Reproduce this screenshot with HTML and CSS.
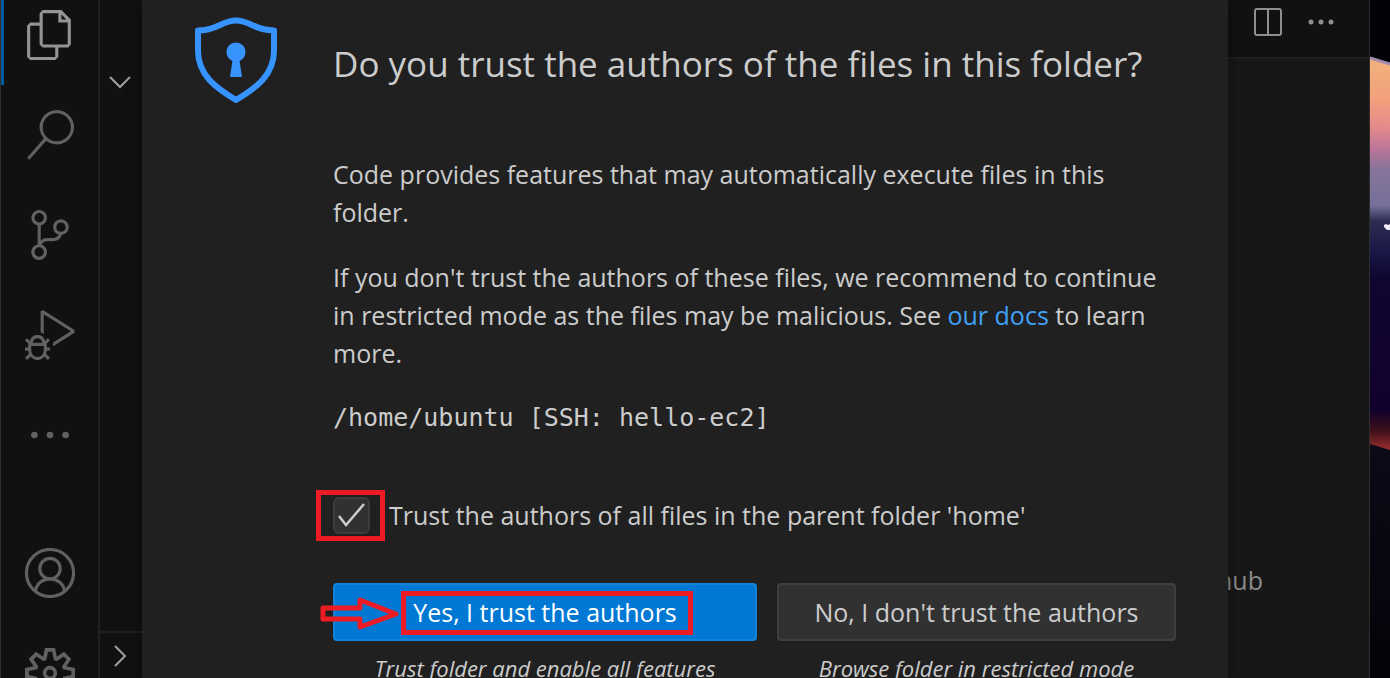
FILE: index.html
```html
<!DOCTYPE html>
<html lang="en">
<head>
<meta charset="utf-8">
<meta name="viewport" content="width=device-width, initial-scale=1">
<title>Workspace Trust</title>
<link rel="stylesheet" href="styles.css">
</head>
<body>
<div class="desktop">
  <div class="window">
    <nav class="activity-bar" aria-label="Activity bar">
      <div class="activity-group activity-top">
        <button class="activity active" aria-label="Explorer"><svg viewBox="0 0 24 24"><path d="M17.5 0h-9L7 1.5V6H2.5L1 7.5v15.07L2.5 24h12.07L16 22.57V18h4.7l1.3-1.43V4.5L17.5 0zm0 2.12l2.38 2.38H17.5V2.12zm-3 20.38h-12v-15H7v9.07L8.5 18h6v4.5zm6-6h-12v-15H16V6h4.5v10.5z"/></svg></button>
        <button class="activity" aria-label="Search"><svg viewBox="0 0 24 24"><path d="M15.25 0a8.25 8.25 0 0 0-6.18 13.72L1 22.88l1.12 1 8.05-9.12A8.251 8.251 0 1 0 15.25.01V0zm0 15a6.75 6.75 0 1 1 0-13.5 6.75 6.75 0 0 1 0 13.5z"/></svg></button>
        <button class="activity" aria-label="Source control"><svg viewBox="0 0 24 24"><path d="M21.007 8.222A3.738 3.738 0 0 0 15.045 5.2a3.737 3.737 0 0 0 1.156 6.583 2.988 2.988 0 0 1-2.668 1.67h-2.99a4.456 4.456 0 0 0-2.989 1.165V7.4a3.737 3.737 0 1 0-1.494 0v9.117a3.776 3.776 0 1 0 1.816.099 2.99 2.99 0 0 1 2.668-1.667h2.99a4.484 4.484 0 0 0 4.223-3.039 3.736 3.736 0 0 0 3.25-3.687zM4.565 3.738a2.242 2.242 0 1 1 4.484 0 2.242 2.242 0 0 1-4.484 0zm4.484 16.441a2.242 2.242 0 1 1-4.484 0 2.242 2.242 0 0 1 4.484 0zm8.221-9.715a2.242 2.242 0 1 1 0-4.485 2.242 2.242 0 0 1 0 4.485z"/></svg></button>
        <button class="activity" aria-label="Run and debug"><svg viewBox="0 0 24 24"><path d="M10.94 13.5l-1.32 1.32a3.73 3.73 0 0 0-7.24 0L1.06 13.5 0 14.56l1.72 1.72-.22.22V18H0v1.5h1.5v.08c.077.489.214.966.41 1.42L0 22.94 1.06 24l1.65-1.65A4.308 4.308 0 0 0 6 24a4.31 4.31 0 0 0 3.29-1.65L10.94 24 12 22.94 10.09 21c.198-.464.336-.951.41-1.45v-.1H12V18h-1.5v-1.5l-.22-.22L12 14.56l-1.06-1.06zM6 13.5a2.25 2.25 0 0 1 2.25 2.25h-4.5A2.25 2.25 0 0 1 6 13.5zm3 6a3.33 3.33 0 0 1-3 3 3.33 3.33 0 0 1-3-3v-2.25h6v2.25zm14.76-9.9v1.26L13.5 17.37V15.6l8.5-5.37L9 2v9.46a5.07 5.07 0 0 0-1.5-.72V.63L8.64 0l15.12 9.6z"/></svg></button>
        <button class="activity" aria-label="Additional views"><svg viewBox="0 0 24 24"><circle cx="4.5" cy="12" r="1.6"/><circle cx="12" cy="12" r="1.6"/><circle cx="19.5" cy="12" r="1.6"/></svg></button>
      </div>
      <div class="activity-group activity-bottom">
        <button class="activity" aria-label="Accounts"><svg viewBox="0 0 24 24" class="outline"><circle cx="12" cy="12" r="11.3"/><circle cx="12" cy="9.9" r="4.9"/><path d="M5 20.7C5.6 17 8.6 14.8 12 14.8S18.400 17 19 20.700"/></svg></button>
        <button class="activity" aria-label="Manage"><svg viewBox="0 0 24 24"><path fill-rule="evenodd" d="M19.85 8.75l4.15.83v4.84l-4.15.83 2.35 3.52-3.43 3.43-3.52-2.35-.83 4.15H9.58l-.83-4.15-3.52 2.35-3.43-3.43 2.35-3.52L0 14.42V9.58l4.15-.83L1.8 5.23 5.23 1.8l3.52 2.35L9.58 0h4.84l.83 4.15 3.52-2.35 3.43 3.43-2.35 3.52zm-1.57 5.07l4-.81v-2l-4-.81-.54-1.3 2.29-3.43-1.43-1.43-3.43 2.29-1.3-.54-.81-4h-2l-.81 4-1.3.54-3.43-2.29-1.43 1.43L6.38 8.9l-.54 1.3-4 .81v2l4 .81.54 1.3-2.29 3.43 1.43 1.43 3.43-2.29 1.3.54.81 4h2l.81-4 1.3-.54 3.43 2.29 1.43-1.43-2.29-3.43.54-1.3zm-8.186-4.672A3.43 3.43 0 0 1 12 8.57 3.44 3.44 0 0 1 15.43 12a3.43 3.43 0 1 1-5.336-2.852zm.956 4.274c.281.188.612.288.95.288A1.7 1.7 0 0 0 13.71 12a1.71 1.71 0 1 0-2.66 1.422z"/></svg></button>
      </div>
    </nav>
    <aside class="sidebar">
      <button class="section-toggle" aria-label="Collapse section"><svg viewBox="0 0 22 22"><path d="M1 6l10 10L21 6"/></svg></button>
      <button class="section-toggle section-last" aria-label="Expand section"><svg viewBox="0 0 22 22"><path d="M6 1l10 10L6 21"/></svg></button>
    </aside>
    <main class="editor">
      <div class="editor-actions">
        <button class="action" aria-label="Split editor"><svg viewBox="0 0 28 28"><rect x="1" y="1" width="26" height="26" rx="2"/><path d="M14 1v26"/></svg></button>
        <button class="action" aria-label="More actions"><svg viewBox="0 0 28 28" class="solid"><circle cx="4" cy="14" r="2.500"/><circle cx="14" cy="14" r="2.500"/><circle cx="24" cy="14" r="2.500"/></svg></button>
      </div>
      <div class="editor-body"><span>hub</span></div>
    </main>

    <div class="modal-layer">
      <section class="dialog" role="dialog" aria-labelledby="dialog-title">
        <svg class="shield" viewBox="0 0 82 86"><path class="shield-line" d="M3 13.500C22 13.500 27 3.500 41 3.500s19 10 38 10V34c0 24-18 37-38 49C21 71 3 58 3 34z"/><circle class="shield-key" cx="41" cy="35" r="9.600"/><path class="shield-key" d="M38 40h6l3 20H35z"/></svg>
        <div class="content">
          <h1 id="dialog-title">Do you trust the authors of the files in this folder?</h1>
          <div class="message">
            <p>Code provides features that may automatically execute files in this folder.</p>
            <p>If you don't trust the authors of these files, we recommend to continue in restricted mode as the files may be malicious. See <a href="#docs">our docs</a> to learn more.</p>
            <p class="path">/home/ubuntu [SSH: hello-ec2]</p>
          </div>
          <div class="trust-parent">
            <input type="checkbox" id="parent" checked>
            <label for="parent">Trust the authors of all files in the parent folder 'home'</label>
            <span class="mark mark-check"></span>
          </div>
          <div class="choices">
            <div class="choice">
              <button class="primary" aria-describedby="yes-note"><span class="button-text">Yes, I trust the authors<span class="mark mark-button"></span></span></button>
              <svg class="arrow" viewBox="0 0 80 34"><path d="M3 11h37V3l36 14-36 13v-8H3z"/></svg>
              <p class="note" id="yes-note">Trust folder and enable all features</p>
            </div>
            <div class="choice">
              <button class="secondary" aria-describedby="no-note">No, I don't trust the authors</button>
              <p class="note" id="no-note">Browse folder in restricted mode</p>
            </div>
          </div>
        </div>
      </section>
    </div>
  </div>
  <svg class="wallpaper" viewBox="0 0 20 678" preserveAspectRatio="none" aria-hidden="true">
    <defs>
      <linearGradient id="sky" gradientUnits="userSpaceOnUse" x1="0" y1="56" x2="0" y2="450">
        <stop offset="0" stop-color="#f2b47c"/><stop offset=".11" stop-color="#f2a07c"/><stop offset=".18" stop-color="#e58a8c"/><stop offset=".24" stop-color="#b87498"/><stop offset=".29" stop-color="#86749a"/><stop offset=".38" stop-color="#75709a"/><stop offset=".42" stop-color="#2d2b50"/><stop offset=".49" stop-color="#1b1a48"/><stop offset=".56" stop-color="#0f0630"/><stop offset=".9" stop-color="#12002c"/><stop offset=".95" stop-color="#3c1018"/><stop offset="1" stop-color="#9a2c30"/>
      </linearGradient>
      <linearGradient id="ground" x1="0" y1="0" x2="0" y2="1"><stop offset="0" stop-color="#0d0918"/><stop offset="1" stop-color="#040308"/></linearGradient>
    </defs>
    <path fill="#030208" d="M0 0h20v70H0z"/>
    <path fill="url(#sky)" d="M0 57l20 6v388H0z"/>
    <path fill="none" stroke="#a48bb0" stroke-width="3" d="M0 58l20 6"/>
    <path fill="#f4ecf8" d="M14 225l2-1 2 1 2-1v6h-3l-3-3z"/>
    <path fill="url(#ground)" d="M0 444l20 6v228H0z"/>
  </svg>
</div>
</body>
</html>
```
FILE: styles.css
```css
* { box-sizing: border-box; }
body {
  margin: 0;
  background: #050308;
  color: #cccccc;
  font-family: "Open Sans", "Noto Sans", sans-serif;
  font-size: 25px;
  line-height: 38px;
}
h1, p { margin: 0; font-weight: 400; }
button { border: 0; padding: 0; background: none; color: inherit; font: inherit; cursor: pointer; }

.desktop { display: flex; height: 100vh; overflow: hidden; }
.window {
  position: relative;
  flex: 1;
  display: flex;
  min-width: 0;
  background: #171717;
  border: solid #2d2d2d;
  border-width: 0 1px;
}
.wallpaper { display: block; width: 20px; height: 100%; }

.activity-bar {
  flex: none;
  display: flex;
  flex-direction: column;
  justify-content: space-between;
  width: 99px;
  background: #111111;
  border-right: 2px solid #1f1f1f;
}
.activity-group { display: flex; flex-direction: column; }
.activity-top { margin-top: -15px; }
.activity-bottom { margin-bottom: -45px; }
.activity { display: grid; place-items: center; height: 100px; color: #616161; }
.activity svg { width: 50px; height: 50px; fill: currentColor; }
.activity .outline { fill: none; stroke: currentColor; stroke-width: 1.5; }
.activity.active { color: #949494; box-shadow: inset 3px 0 #005a9e; }

.sidebar {
  flex: none;
  display: flex;
  flex-direction: column;
  justify-content: space-between;
  width: 42px;
  padding-top: 58px;
  background: #111111;
}
.section-toggle { display: flex; align-items: center; height: 47px; padding-left: 9px; }
.section-toggle svg { width: 22px; height: 22px; fill: none; stroke: #a0a0a0; stroke-width: 2; }
.section-last { border-top: 2px solid #1f1f1f; }

.editor { flex: 1; display: flex; flex-direction: column; min-width: 0; }
.editor-actions {
  display: flex;
  justify-content: flex-end;
  gap: 25px;
  padding: 8px 34px 21px;
  background: #111111;
  border-bottom: 2px solid #1f1f1f;
}
.action { display: block; height: 28px; }
.action svg { display: block; width: 28px; height: 28px; fill: none; stroke: #8f8f8f; stroke-width: 2; }
.action .solid { fill: #8f8f8f; stroke: none; }
.editor-body {
  flex: 1;
  display: flex;
  align-items: flex-end;
  justify-content: flex-end;
  padding: 0 106px 79px 0;
  color: #8c8c8c;
}

.modal-layer { position: absolute; inset: 0; display: flex; justify-content: center; align-items: flex-start; }
.dialog {
  display: flex;
  gap: 56px;
  width: 1086px;
  max-width: 100%;
  min-height: 100%;
  padding: 17px 52px 0 53px;
  background: #202020;
  box-shadow: 0 0 16px rgba(0, 0, 0, 0.36);
}
.shield { flex: none; width: 82px; height: 86px; }
.shield-line { fill: none; stroke: #3794ff; stroke-width: 6; stroke-linejoin: round; }
.shield-key { fill: #3794ff; }
.content { flex: 1; min-width: 0; padding-top: 22px; }
h1 { font-size: 35px; line-height: 50px; }
.message { display: flex; flex-direction: column; gap: 27px; padding-top: 66px; }
a { color: #40a0f8; text-decoration: none; }
.path { font-family: "DejaVu Sans Mono", monospace; }

.trust-parent { position: relative; display: flex; align-items: center; gap: 19px; padding-top: 59px; }
.trust-parent input {
  appearance: none;
  flex: none;
  width: 37px;
  height: 37px;
  margin: 0;
  border: 2px solid #3c3c3c;
  border-radius: 6px;
  background: #313131;
}
.trust-parent input:checked {
  background: #313131 url("data:image/svg+xml,%3Csvg xmlns='http://www.w3.org/2000/svg' viewBox='0 0 33 33'%3E%3Cpath d='M4 17l7 9L29 5' fill='none' stroke='%23cccccc' stroke-width='2.500'/%3E%3C/svg%3E") center / 33px 33px no-repeat;
}

.choices { display: grid; grid-template-columns: 424fr 399fr; gap: 20px; padding-top: 49px; }
.choice { position: relative; text-align: center; }
.choice button { display: block; width: 100%; height: 58px; border: 2px solid #3e3e3e; border-radius: 4px; }
.choice .primary { background: #0078d4; border-color: #1482d7; color: #ffffff; }
.choice .secondary { background: #313131; }
.note { padding-top: 8px; font-size: 22px; font-style: italic; }

/* Red highlight marks laid over the controls */
.mark { position: absolute; border: 5px solid #ed1c24; pointer-events: none; }
.mark-check { left: -17px; bottom: -7px; width: 69px; height: 51px; }
.button-text { position: relative; display: inline-block; }
.mark-button { inset: -2px -16px -4px -12px; }
.arrow { position: absolute; left: -13px; top: 14px; width: 80px; height: 34px; fill: none; stroke: #ed1c24; stroke-width: 5; stroke-linejoin: round; }
```
